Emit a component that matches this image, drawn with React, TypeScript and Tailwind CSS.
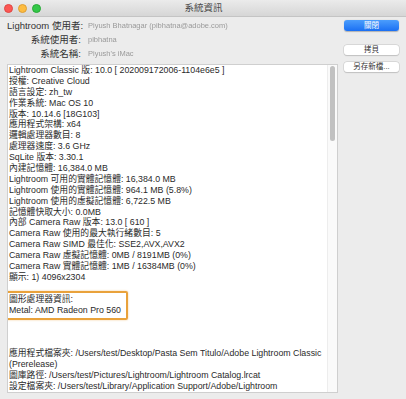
const lines: string[] = [
  'Lightroom Classic 版: 10.0 [ 202009172006-1104e6e5 ]',
  '授權: Creative Cloud',
  '語言設定: zh_tw',
  '作業系統: Mac OS 10',
  '版本: 10.14.6 [18G103]',
  '應用程式架構: x64',
  '邏輯處理器數目: 8',
  '處理器速度: 3.6 GHz',
  'SqLite 版本: 3.30.1',
  '內建記憶體: 16,384.0 MB',
  'Lightroom 可用的實體記憶體: 16,384.0 MB',
  'Lightroom 使用的實體記憶體: 964.1 MB (5.8%)',
  'Lightroom 使用的虛擬記憶體: 6,722.5 MB',
  '記憶體快取大小: 0.0MB',
  '內部 Camera Raw 版本: 13.0 [ 610 ]',
  'Camera Raw 使用的最大執行緒數目: 5',
  'Camera Raw SIMD 最佳化: SSE2,AVX,AVX2',
  'Camera Raw 虛擬記憶體: 0MB / 8191MB (0%)',
  'Camera Raw 實體記憶體: 1MB / 16384MB (0%)',
  '顯示: 1) 4096x2304',
];

const tail: string[] = [
  '應用程式檔案夾: /Users/test/Desktop/Pasta Sem Titulo/Adobe Lightroom Classic',
  '(Prerelease)',
  '圖庫路徑: /Users/test/Pictures/Lightroom/Lightroom Catalog.lrcat',
  '設定檔案夾: /Users/test/Library/Application Support/Adobe/Lightroom',
];

const font = { fontFamily: '"Liberation Sans", "Noto Sans CJK TC", sans-serif' };

function Line({ children }: { children: React.ReactNode }) {
  return <div className="h-[10.9px] leading-[10.9px] overflow-visible">{children}</div>;
}

export default function App() {
  return (
    <div
      className="w-[406px] h-[399px] bg-[#ececec] flex flex-col overflow-hidden text-[#222]"
      style={font}
    >
      {/* title bar */}
      <div className="h-[17px] shrink-0 flex items-center relative bg-gradient-to-b from-[#ebebeb] to-[#d6d6d6] border-b border-[#c4c4c4]">
        <div className="flex gap-[5px] pl-[4px]">
          <span className="w-[9px] h-[9px] rounded-full bg-[#fc5753] border border-[#df4744]" />
          <span className="w-[9px] h-[9px] rounded-full bg-[#fdbc40] border border-[#de9f34]" />
          <span className="w-[9px] h-[9px] rounded-full bg-[#33c748] border border-[#27aa35]" />
        </div>
        <div className="flex-1 text-center text-[9.5px] text-[#4a4a4a] pr-[40px]">系統資訊</div>
      </div>

      <div className="flex flex-1 min-h-0">
        <div className="w-[338px] flex flex-col pl-[7px] pb-[6px]">
          {/* header rows */}
          <div className="flex flex-col pt-[2px] text-[9.5px]">
            {[
              ['Lightroom 使用者:', 'Piyush Bhatnagar (pibhatna@adobe.com)'],
              ['系統使用者:', 'pibhatna'],
              ['系統名稱:', "Piyush's iMac"],
            ].map(([k, v]) => (
              <div key={k} className="flex items-center h-[14px] whitespace-nowrap">
                <span className="w-[74px] text-right text-[#333]">{k}</span>
                <span className="ml-[7px] text-[7.5px] text-[#9a9a9a] blur-[0.6px]">{v}</span>
              </div>
            ))}
          </div>

          {/* text area */}
          <div className="mt-[3px] flex-1 bg-white border border-[#cfcfcf] flex min-h-0">
            <div className="flex-1 pl-[1px] text-[8.8px] text-[#2a2a2a] whitespace-nowrap overflow-hidden">
              {lines.map((l) => (
                <Line key={l}>{l}</Line>
              ))}
              <Line>&nbsp;</Line>
              <div className="relative">
                <Line>圖形處理器資訊:</Line>
                <Line>Metal: AMD Radeon Pro 560</Line>
                <div className="absolute -left-[4px] -top-[3px] w-[123px] h-[29px] border-2 border-[#e9a23b] rounded-[2px] shadow-[0_0_2px_rgba(233,162,59,0.6)]" />
              </div>
              <Line>&nbsp;</Line>
              <Line>&nbsp;</Line>
              <Line>&nbsp;</Line>
              {tail.map((l) => (
                <Line key={l}>{l}</Line>
              ))}
            </div>
            <div className="w-[10px] border-l border-[#ededed] bg-[#fafafa] flex justify-center pt-[1px]">
              <div className="w-[5px] h-[75px] rounded-full bg-[#c1c1c1]" />
            </div>
          </div>
        </div>

        {/* buttons */}
        <div className="flex-1 flex flex-col items-end pr-[7px] pt-[3px] text-[7.5px]">
          <button className="w-[55px] h-[11px] rounded-[3px] bg-gradient-to-b from-[#4b9dfc] to-[#1a6ff3] text-white leading-[11px] shadow-[0_0.5px_1px_rgba(0,0,0,0.25)]">
            關閉
          </button>
          <button className="mt-[14px] w-[55px] h-[10px] rounded-[3px] bg-white text-[#333] leading-[10px] shadow-[0_0_0_0.5px_#c8c8c8,0_0.5px_1px_rgba(0,0,0,0.2)]">
            拷貝
          </button>
          <button className="mt-[7px] w-[55px] h-[10px] rounded-[3px] bg-white text-[#333] leading-[10px] shadow-[0_0_0_0.5px_#c8c8c8,0_0.5px_1px_rgba(0,0,0,0.2)]">
            另存新檔...
          </button>
        </div>
      </div>
    </div>
  );
}
